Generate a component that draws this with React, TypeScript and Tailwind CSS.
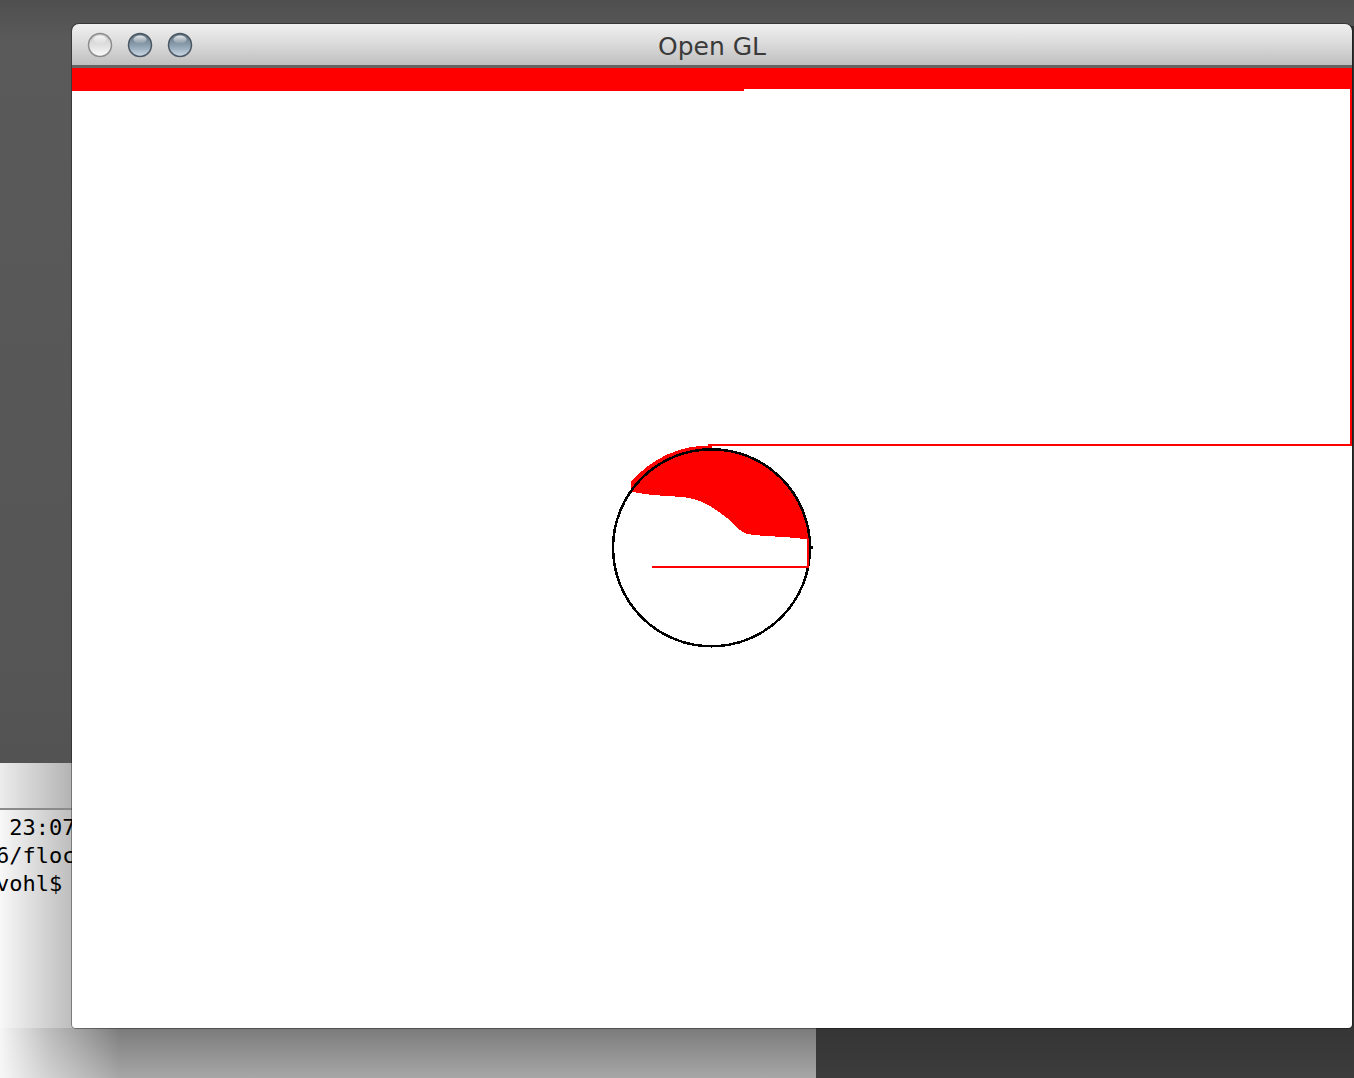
import React from "react"

function Light({ id, inactive }: { id: string, inactive?: boolean }) {
    const top = inactive ? "#c9c9c9" : "#5f7282"
    const mid = inactive ? "#e2e2e2" : "#8ea2b2"
    const bottom = inactive ? "#fbfbfb" : "#cddbe6"
    const ring = inactive ? "#8c8c8c" : "#4b5863"
    return (
        <svg width="26" height="26" viewBox="0 0 26 26">
            <defs>
                <linearGradient id={`${id}-fill`} x1="0" y1="0" x2="0" y2="1">
                    <stop offset="0%" stopColor={top} />
                    <stop offset="55%" stopColor={mid} />
                    <stop offset="100%" stopColor={bottom} />
                </linearGradient>
                <linearGradient id={`${id}-shine`} x1="0" y1="0" x2="0" y2="1">
                    <stop offset="0%" stopColor="#ffffff" stopOpacity="0.85" />
                    <stop offset="100%" stopColor="#ffffff" stopOpacity="0.05" />
                </linearGradient>
            </defs>
            <circle cx="13" cy="13" r="11.5" fill={`url(#${id}-fill)`} stroke={ring} strokeWidth="1.5" />
            <ellipse cx="13" cy="7.5" rx="6.5" ry="4" fill={`url(#${id}-shine)`} />
        </svg>
    )
}

function Terminal() {
    return (
        <div className="absolute left-0 top-[763px] w-[816px] h-[315px] flex flex-col font-['DejaVu_Sans_Mono',monospace]">
            <div className="h-[45px] bg-[linear-gradient(to_right,#ececec,#b3b3b3_72px,#9c9c9c_140px)]"></div>
            <div className="h-[2px] bg-[#8a8a8a]"></div>
            <div className="relative flex-1 flex flex-col bg-[linear-gradient(to_right,#f8f8f8,#bdbdbd_72px,#9e9e9e_140px)]">
                <div className="pt-[4px] ml-[-4px] text-[22px] leading-[28px] text-black whitespace-pre">
                    <div>{" 23:07"}</div>
                    <div>{"6/floc"}</div>
                    <div>{"vohl$"}</div>
                </div>
                {/* shadow the front window casts below itself */}
                <div className="mt-auto h-[50px] bg-[linear-gradient(to_right,rgba(250,250,250,0.97),rgba(250,250,250,0.5)_50px,rgba(250,250,250,0)_120px),linear-gradient(to_bottom,#7b7b7b,#a7a7a7)]"></div>
            </div>
        </div>
    )
}

function Canvas() {
    // drawing coordinates = page coords minus (72, 68)
    return (
        <svg width="1280" height="960" viewBox="0 0 1280 960" className="block" shapeRendering="crispEdges">
            <rect x="0" y="0" width="1280" height="21" fill="#ff0000" />
            <rect x="0" y="0" width="672" height="23" fill="#ff0000" />
            <path d="M 636 376.7 H 1279 V 21" fill="none" stroke="#ff0000" strokeWidth="2" />
            <path
                d="M 559 423.7 L 579.7 427 L 611 429 C 628 431, 640 438, 655 450 C 665 460, 670 466, 681 467 L 725 470 L 738 472 A 99 99 0 0 0 639.5 380.8 L 639.5 377.5 A 102.5 102.5 0 0 0 559 414 Z"
                fill="#ff0000"
            />
            <circle cx="639.5" cy="479.8" r="98.5" fill="none" stroke="#000000" strokeWidth="2.5" />
            <path d="M 579.7 498.7 H 736 V 470" fill="none" stroke="#ff0000" strokeWidth="2" />
            <rect x="739" y="478" width="2" height="3" fill="#000000" />
        </svg>
    )
}

function App() {
    return (
        <div className="relative w-[1354px] h-[1078px] overflow-hidden bg-[linear-gradient(to_bottom,#4f4f4f,#5a5a5a_40px,#555555_700px,#474747)]">
            <div className="absolute left-[816px] top-[26px] right-0 bottom-0 bg-[linear-gradient(to_bottom,#333333,#2e2e2e_950px,#3c3c3c)]"></div>
            <Terminal />

            <div className="absolute left-[72px] top-[24px] w-[1280px] h-[1004px] flex flex-col rounded-t-[7px] rounded-b-[4px] overflow-hidden shadow-[0_0_0_1px_rgba(0,0,0,0.35)]">
                <div className="h-[44px] grid grid-cols-[1fr_auto_1fr] border-b-[3px] border-[#646464] bg-[linear-gradient(to_bottom,#f0f0f0,#dcdcdc_45%,#bfbfbf)]">
                    <div className="flex items-center gap-[14px] pl-[15px] pt-[1px]">
                        <Light id="close" inactive />
                        <Light id="min" />
                        <Light id="max" />
                    </div>
                    <div className="pt-[8px] text-[25px] leading-[29px] text-[#3a3a3a] font-['DejaVu_Sans',sans-serif]">Open GL</div>
                    <div></div>
                </div>
                <div className="flex-1 bg-white">
                    <Canvas />
                </div>
            </div>
        </div>
    )
}

export default App
